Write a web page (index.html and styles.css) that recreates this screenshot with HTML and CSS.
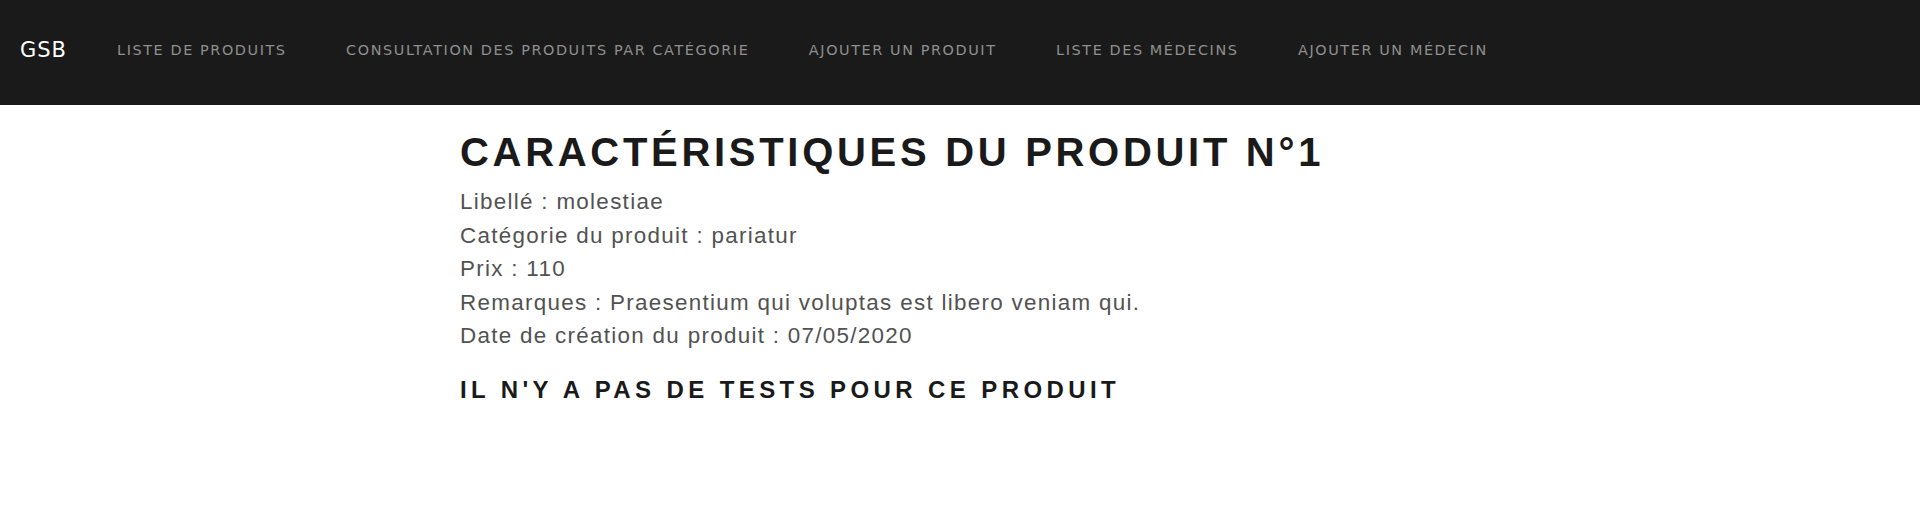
FILE: index.html
```html
<!DOCTYPE html>
<html lang="fr">
<head>
<meta charset="utf-8">
<title>GSB</title>
<link rel="stylesheet" href="styles.css">
</head>
<body>
<nav class="navbar">
  <a class="brand" href="#">GSB</a>
  <ul class="nav-links">
    <li><a href="#">Liste de produits</a></li>
    <li><a href="#">Consultation des produits par catégorie</a></li>
    <li><a href="#">Ajouter un produit</a></li>
    <li><a href="#">Liste des médecins</a></li>
    <li><a href="#">Ajouter un médecin</a></li>
  </ul>
</nav>
<main class="content">
  <h1 class="title">Caractéristiques du produit N°1</h1>
  <div class="details">
    <div class="line">Libellé : molestiae</div>
    <div class="line">Catégorie du produit : pariatur</div>
    <div class="line">Prix : 110</div>
    <div class="line">Remarques : Praesentium qui voluptas est libero veniam qui.</div>
    <div class="line">Date de création du produit : 07/05/2020</div>
  </div>
  <h2 class="subtitle">Il n'y a pas de tests pour ce produit</h2>
</main>
</body>
</html>
```

FILE: styles.css
```css
* { box-sizing: border-box; }
html, body { margin: 0; padding: 0; }
body {
  background: #ffffff;
  font-family: "Liberation Sans", Arial, sans-serif;
}
.navbar {
  height: 105px;
  background: #1a1a1a;
  display: flex;
  align-items: center;
  padding: 0 0 6px 20px;
  font-family: "DejaVu Sans", sans-serif;
}
.brand {
  color: #ffffff;
  text-decoration: none;
  font-size: 21px;
  letter-spacing: 1px;
  margin-right: 50px;
}
.nav-links {
  display: flex;
  gap: 59.5px;
  list-style: none;
  margin: 0;
  padding: 0;
}
.nav-links a {
  color: #8f8f8f;
  text-decoration: none;
  text-transform: uppercase;
  font-size: 14.4px;
  letter-spacing: 1.6px;
}
.content {
  width: 1000px;
  margin: 0 auto;
  padding-top: 23px;
}
.title {
  margin: 0;
  font-size: 40px;
  line-height: 48px;
  font-weight: 700;
  letter-spacing: 3.7px;
  text-transform: uppercase;
  color: #1a1a1a;
}
.details {
  margin-top: 9px;
  font-size: 22.4px;
  line-height: 33.6px;
  letter-spacing: 1.3px;
  color: #525252;
}
.subtitle {
  margin: 23px 0 0;
  font-size: 24px;
  line-height: 28.8px;
  font-weight: 700;
  letter-spacing: 4.4px;
  text-transform: uppercase;
  color: #1a1a1a;
}
```
